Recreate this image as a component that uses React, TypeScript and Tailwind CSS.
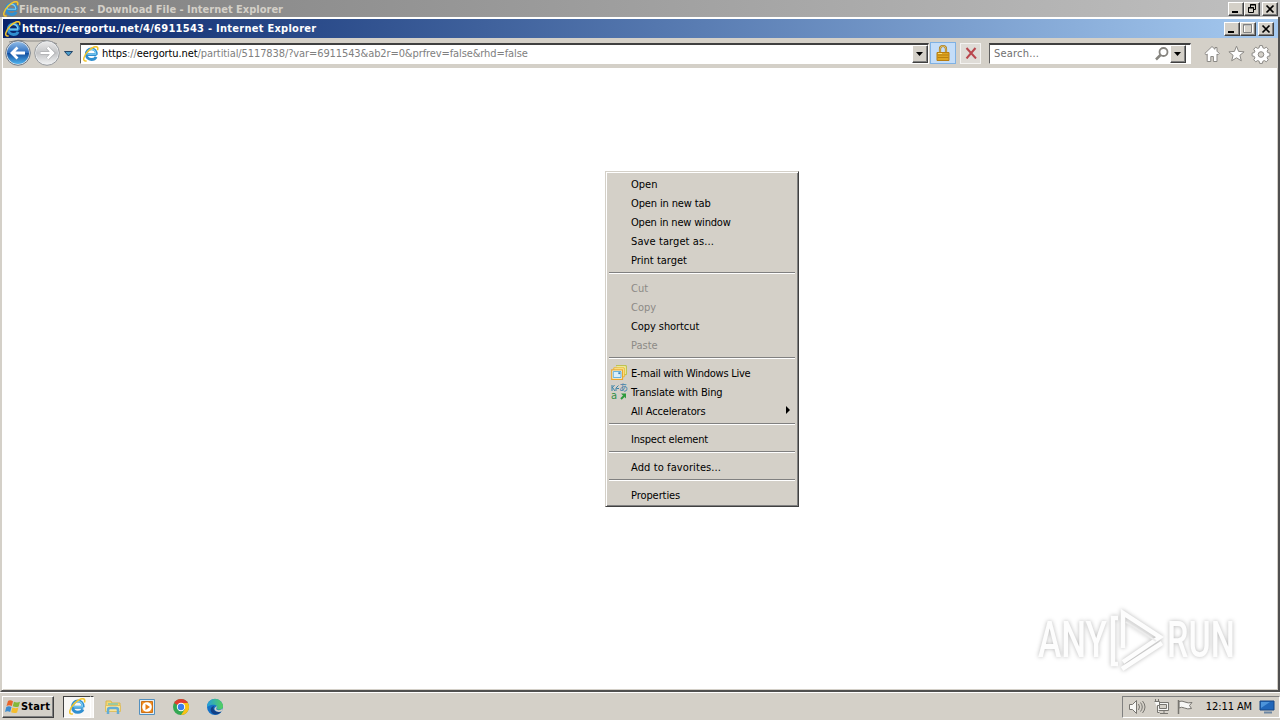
import { ReactNode } from 'react'
import clsx from 'clsx'

const UI_FONT = "font-['DejaVu_Sans_Condensed','DejaVu_Sans',sans-serif]"

type MenuEntry = { label: string; tracking?: string; disabled?: boolean; icon?: ReactNode; submenu?: boolean }

const MENU: MenuEntry[][] = [
  [
    { label: 'Open' },
    { label: 'Open in new tab', tracking: 'tracking-[-0.13px]' },
    { label: 'Open in new window', tracking: 'tracking-[-0.18px]' },
    { label: 'Save target as...', tracking: 'tracking-[0.1px]' },
    { label: 'Print target' }
  ],
  [
    { label: 'Cut', disabled: true },
    { label: 'Copy', disabled: true },
    { label: 'Copy shortcut', tracking: 'tracking-[-0.08px]' },
    { label: 'Paste', disabled: true }
  ],
  [
    { label: 'E-mail with Windows Live', tracking: 'tracking-[-0.27px]', icon: <MailIcon /> },
    { label: 'Translate with Bing', tracking: 'tracking-[-0.14px]', icon: <TranslateIcon /> },
    { label: 'All Accelerators', tracking: 'tracking-[-0.16px]', submenu: true }
  ],
  [{ label: 'Inspect element', tracking: 'tracking-[-0.2px]' }],
  [{ label: 'Add to favorites...', tracking: 'tracking-[0.1px]' }],
  [{ label: 'Properties', tracking: 'tracking-[-0.08px]' }]
]

function IeIcon({ className }: { className: string }) {
  return (
    <svg viewBox="0 0 16 16" className={clsx('shrink-0', className)} fill="none">
      <path d="M13.500 8.600H4M13.400 8.600C13.500 4.900 11.400 2.900 8.400 2.900C5.300 2.900 3.300 5.200 3.300 8.300C3.300 11.500 5.400 13.500 8.400 13.500C10.700 13.500 12.300 12.500 13.100 10.800" stroke="#2f8fd0" strokeWidth="2.8" />
      <path d="M13 8.300H4.500M12.800 8C12.600 5 10.700 3.400 8.400 3.400C5.800 3.400 4 5.400 4 8.200" stroke="#7fd0f5" strokeWidth="1.1" />
      <path d="M3.600 14.800C1.400 15.700 .3 14.300 .9 11.900C2 7.700 6.700 2.600 11 1C14 0 15.500 1.300 14.500 4.200" stroke="#f3c52c" strokeWidth="1.5" />
    </svg>
  )
}

function MailIcon() {
  return (
    <svg viewBox="0 0 16 16" className="mb-0.5 size-4">
      <path d="M5 .7h10.300v9H13" fill="#f5f3b0" stroke="#b8bd38" />
      <path d="M2.800 2.800h10.500v9H2.800z" fill="#fdf0a0" stroke="#e8b634" />
      <path d="M.7 4.800h10.800v9.500H.7z" fill="#eef8fd" stroke="#e9a72e" strokeWidth="1.2" />
      <path d="M2.300 6.500h7.700v6H2.300z" fill="#d9effb" stroke="#4ba2d2" strokeWidth=".8" />
      <path d="M7.300 7.300h2v1.800h-2z" fill="#3b85bd" />
    </svg>
  )
}

function TranslateIcon() {
  return (
    <div className="mb-0.5 grid size-4 grid-cols-2 grid-rows-2 text-[9px] leading-[8px]">
      <svg viewBox="0 0 8 8" className="size-2" fill="none" stroke="#3b83a8">
        <path d="M1 1v6M1 4l2.500-3M1.500 3.500L4 7M7.500 1.500L5 4M5 4v3M5.500 4.500h2.500" />
      </svg>
      <span className="font-['Noto_Sans_CJK_JP',sans-serif] whitespace-nowrap text-[#3479a6]">あ</span>
      <span className="text-[11px] text-[#2f8f45]">a</span>
      <svg viewBox="0 0 8 8" className="size-2" fill="#2d9a3b">
        <path d="M2 7l3-3" stroke="#2d9a3b" strokeWidth="2" />
        <path d="M2 1.500h5v5z" />
      </svg>
    </div>
  )
}

function RaisedButton({ className, children }: { className: string; children: ReactNode }) {
  return (
    <div className={clsx('flex shrink-0 items-center justify-center border border-t-white border-l-white border-r-[#404040] border-b-[#404040] bg-[#d4d0c8] shadow-[inset_-1px_-1px_0_#808080]', className)}>
      {children}
    </div>
  )
}

function WindowButtons({ restored }: { restored?: boolean }) {
  return (
    <div className="flex">
      <RaisedButton className="h-[14px] w-4">
        <svg viewBox="0 0 14 12" className="h-3 w-[14px]"><path d="M3 8h6v2H3z" /></svg>
      </RaisedButton>
      <RaisedButton className="h-[14px] w-4">
        {restored ? (
          <svg viewBox="0 0 14 12" className="h-3 w-[14px]" fill="none" stroke="#000">
            <path d="M5.500 4V1.500h5v5H9M5 2h6M3.500 4.500h5v5h-5zM3 5h6" />
          </svg>
        ) : (
          <svg viewBox="0 0 14 12" className="h-3 w-[14px]" fill="none" stroke="#808080">
            <path d="M3.500 1.500h8v8h-8zM3 2.500h9" stroke="#fff" />
            <path d="M2.500 1.500h8v8h-8zM2 2h9" />
          </svg>
        )}
      </RaisedButton>
      <RaisedButton className="ml-0.5 h-[14px] w-4">
        <svg viewBox="0 0 14 12" className="h-3 w-[14px]"><path d="M3.500 2.500l7 7m0-7l-7 7" stroke="#000" strokeWidth="1.700" /></svg>
      </RaisedButton>
    </div>
  )
}

function DropButton() {
  return (
    <RaisedButton className="h-[18px] w-4">
      <svg viewBox="0 0 8 4" className="h-1 w-2"><path d="M0 0h7L3.500 4z" /></svg>
    </RaisedButton>
  )
}

function NavButtons() {
  return (
    <svg viewBox="0 0 72 28" className="h-7 w-[72px] shrink-0">
      <defs>
        <linearGradient id="back" x2="0" y2="1">
          <stop offset="0" stopColor="#8db9e6" />
          <stop offset=".48" stopColor="#2f6fc0" />
          <stop offset=".52" stopColor="#144f9f" />
          <stop offset="1" stopColor="#4fb2ee" />
        </linearGradient>
        <linearGradient id="forward" x2="0" y2="1">
          <stop offset="0" stopColor="#e8e8e8" />
          <stop offset=".5" stopColor="#c2c3c5" />
          <stop offset="1" stopColor="#f0f1f2" />
        </linearGradient>
      </defs>
      <path d="M6 3Q15 0 24 2h12Q44 0 54 5" fill="none" stroke="#8c8a86" />
      <circle cx="15" cy="14" r="12.300" fill="#dfe5ec" stroke="#6c7784" />
      <circle cx="15" cy="14" r="11" fill="url(#back)" />
      <path d="M22 14H9.500M14.500 8.500L9 14l5.500 5.500" fill="none" stroke="#fff" strokeWidth="2.800" />
      <circle cx="44" cy="14" r="12.300" fill="#eceef0" stroke="#96999d" />
      <circle cx="44" cy="14" r="11" fill="url(#forward)" />
      <path d="M37.500 14H50M44.500 8.500L50 14l-5.500 5.500" fill="none" stroke="#9c9ea1" strokeWidth="3.800" />
      <path d="M37.500 14H50M44.500 8.500L50 14l-5.500 5.500" fill="none" stroke="#fff" strokeWidth="2.600" />
      <path d="M61.500 12.500h8L65.500 17z" fill="#4b9cc9" stroke="#24466a" />
    </svg>
  )
}

function LockIcon() {
  return (
    <svg viewBox="0 0 16 18" className="h-[18px] w-4">
      <path d="M5 9V5a3 3 0 0 1 6 0v4" fill="none" stroke="#a87b1d" strokeWidth="2.200" />
      <path d="M5 9V5a3 3 0 0 1 6 0v4" fill="none" stroke="#e9ca72" strokeWidth=".8" />
      <path d="M2 8.500h12v8H2z" fill="#dea520" stroke="#b67c12" />
      <path d="M2.500 11h11M2.500 13.500h11" stroke="#b9810f" />
      <path d="M3 9.500h4" stroke="#f9de7a" />
    </svg>
  )
}

function ToolbarIcons() {
  return (
    <svg viewBox="0 0 68 20" className="mt-0.5 ml-[13px] h-5 w-[68px] shrink-0" fill="#fff" stroke="#8b8985" strokeLinejoin="round">
      <path d="M8 2.500L.8 9.500l1.400 1.300 1-.8v7.500h3.600v-5h2.600v5H13V10l1 .8 1.300-1.300-2.300-2.300V3.500h-2v1.800z" />
      <path d="M32.500 2.200l2.100 5.200 5.500.4-4.200 3.500 1.400 5.500-4.800-3-4.800 3 1.400-5.500-4.200-3.500 5.500-.4z" />
      <path d="M55.600 2.300h2.800l.5 2.200 1.500.6 1.900-1.200 2 2-1.200 1.900.6 1.500 2.200.5v2.800l-2.200.5-.6 1.500 1.200 1.900-2 2-1.900-1.200-1.500.6-.5 2.200h-2.800l-.5-2.200-1.500-.6-1.900 1.200-2-2 1.200-1.900-.6-1.500-2.200-.5V9.800l2.200-.5.6-1.500-1.200-1.900 2-2 1.900 1.200 1.500-.6z" transform="translate(0 -.7)" />
      <circle cx="57" cy="10.500" r="2.800" fill="#d4d0c8" />
    </svg>
  )
}

function Toolbar() {
  return (
    <div className="flex h-[30px] items-center bg-[#d4d0c8]">
      <NavButtons />
      <div className="ml-[5px] flex h-[21px] w-[849px] shrink-0 items-center border border-t-2 border-t-[#404040] border-l-[#606060] border-r-white border-b-white bg-white pl-0.5">
        <IeIcon className="size-4" />
        <div className="ml-[3px] grow pt-0.5 text-[11px] tracking-[-0.1px] whitespace-pre text-[#808080]">
          <span className="text-black">https</span>://<span className="text-black">eergortu.net</span>/partitial/5117838/?var=6911543&amp;ab2r=0&amp;prfrev=false&amp;rhd=false
        </div>
        <DropButton />
      </div>
      <div className="ml-px flex h-[22px] w-[26px] shrink-0 items-center justify-center border border-[#7fb1e3] bg-[#c4ddf8]">
        <LockIcon />
      </div>
      <div className="ml-1 flex h-[21px] w-[21px] shrink-0 items-center justify-center border border-[#f4f3f1] bg-[#dfdcd7]">
        <svg viewBox="0 0 12 12" className="size-3"><path d="M1.500 1L11 11.500M10.500 1L1.500 11.500" stroke="#b9474e" strokeWidth="2" /></svg>
      </div>
      <div className="ml-2 flex h-[21px] w-[202px] shrink-0 items-center border border-t-2 border-t-[#404040] border-l-[#606060] border-r-white border-b-white bg-white pr-[4px] pl-1">
        <span className="grow pt-0.5 text-[11px] tracking-[0.2px] text-[#707070]">Search...</span>
        <svg viewBox="0 0 16 16" className="size-4" fill="none" stroke="#86847f">
          <circle cx="9.500" cy="6" r="4" strokeWidth="1.800" />
          <path d="M6.500 9L2 13.500" strokeWidth="2.500" />
        </svg>
        <DropButton />
      </div>
      <ToolbarIcons />
    </div>
  )
}

function ContextMenu() {
  return (
    <div className="absolute top-[171px] left-[605px] h-[336px] w-[194px] border border-t-[#d4d0c8] border-l-[#d4d0c8] border-r-[#404040] border-b-[#404040] bg-[#d4d0c8] px-[3px] pt-[3px] text-[11px] shadow-[inset_1px_1px_0_#fff,inset_-1px_-1px_0_#808080]">
      {MENU.map((group, i) => (
        <div key={i}>
          {i > 0 && (
            <div className="h-[9px] pt-0.5">
              <div className="h-0.5 border-t border-b border-t-[#808080] border-b-white" />
            </div>
          )}
          {group.map(({ label, tracking, disabled, icon, submenu }) => (
            <div key={label} className="flex h-[19px] items-center">
              <div className="ml-0.5 w-5 shrink-0">{icon}</div>
              <span className={clsx('grow pt-0.5 whitespace-pre', tracking, disabled ? 'text-[#8c8a86]' : 'text-black')}>{label}</span>
              {submenu && <svg viewBox="0 0 4 8" className="mr-[5px] mb-1 h-2 w-1"><path d="M0 0l4 4-4 4z" /></svg>}
            </div>
          ))}
        </div>
      ))}
    </div>
  )
}

function Watermark() {
  return (
    <div className="absolute top-[600px] left-[1030px] flex h-20 w-[215px] items-center pl-2 font-[Roboto] text-[50px] leading-[80px] font-medium text-[#fdfdfd] drop-shadow-[0_0_2px_#b8b8b8]">
      <div className="w-[66px]">
        <div className="w-24 origin-left scale-x-[0.7]">ANY</div>
      </div>
      <svg viewBox="74 0 60 80" className="h-20 w-[60px] shrink-0" fill="none" stroke="#fdfdfd">
        <path d="M93 48V13l37 24-37 25M88 18h-5v46h5M92 69l40-26" strokeWidth="4.500" />
        <path d="M96 22l30 19" stroke="#ececec" strokeWidth="2" />
      </svg>
      <div className="ml-[3px] w-[66px]">
        <div className="w-24 origin-left scale-x-[0.68]">RUN</div>
      </div>
    </div>
  )
}

function TrayIcons() {
  return (
    <svg viewBox="0 0 68 18" className="h-[18px] w-[68px] shrink-0" fill="#f7f7f5" stroke="#777570">
      <path d="M.5 6.500h3l4-4v13l-4-4h-3z" />
      <path d="M9.500 6q2 3 0 6M11.500 4.500q3.500 4.500 0 9M13.500 3q5 6 0 12" fill="none" />
      <path d="M28.500 4.500h11v8h-11zM31 15.500h8M35 12.500v3" />
      <path d="M30.500 6.500h7v4h-7z" fill="#d4d0c8" />
      <path d="M25.500 3.500h5v4h-2v7h2M26.500 1v2M29.500 1v2" />
      <path d="M50 3.500q3-1 6 .5t7 .5l-2.500 3 2 3q-4 1-7-.500t-5.500 0z" />
      <path d="M49.500 2v14" strokeWidth="1.500" />
    </svg>
  )
}

function Taskbar() {
  return (
    <div className="flex h-7 items-center border-t border-white bg-[#d4d0c8]">
      <RaisedButton className="ml-0.5 h-[22px] w-[52px]">
        <svg viewBox="0 0 16 16" className="size-4 shrink-0">
          <path d="M3 2q2-1.500 5 .3L6.800 7Q4 5.700 1.500 7z" fill="#e9652a" />
          <path d="M9 2.700q3 1.500 6 0L13.700 7.500q-3 1.200-6-.2z" fill="#83b83a" />
          <path d="M1.300 8q2.500-1.300 5.200 0L5.200 13Q2.500 11.500 0 13z" fill="#3c8cd0" />
          <path d="M7.400 8.400q3 1.400 6 .2l-1.300 4.800q-3 1.200-6-.2z" fill="#f5bd2c" />
        </svg>
        <span className="pt-px pr-px text-[11px] font-bold tracking-[0.2px]">Start</span>
      </RaisedButton>
      <div className="ml-[9px] flex h-[22px] w-7 shrink-0 items-center justify-center border border-t-[#404040] border-l-[#404040] border-r-white border-b-white bg-[#f8f7f5]">
        <IeIcon className="size-[17px]" />
      </div>
      <div className="h-[22px] w-[3px] border-t border-r border-t-[#404040] border-r-white bg-[#f8f7f5]" />
      <svg viewBox="0 0 18 18" className="ml-[10px] size-[18px] shrink-0">
        <path d="M2 3h5l1 2h8v4H2z" fill="#f3d875" stroke="#d8b64f" />
        <path d="M4 5h10v3H4z" fill="#9cc99d" />
        <path d="M1.500 7.500h15v6h-15z" fill="#f7e69c" stroke="#dfbf62" />
        <path d="M4 16v-4q0-2 2-2h6q2 0 2 2v4" fill="none" stroke="#63add5" strokeWidth="2.500" />
      </svg>
      <svg viewBox="0 0 18 18" className="ml-4 size-[18px] shrink-0">
        <path d="M1.500 1.500h15v15h-15z" fill="#e1edf5" stroke="#5390bf" />
        <path d="M3.500 3.500h11v11h-11z" fill="#f28c1d" stroke="#cc7017" />
        <circle cx="9" cy="9" r="4.800" fill="#fff" />
        <path d="M7.500 6l4.500 3-4.500 3z" fill="#e87c13" />
      </svg>
      <svg viewBox="0 0 18 18" className="ml-4 size-[18px] shrink-0">
        <circle cx="9" cy="9" r="8" fill="#34a853" />
        <path d="M9 9L2.070 5A8 8 0 0 1 15.930 5z" fill="#e23c2f" />
        <path d="M9 5h6.930A8 8 0 0 1 9 17l4-6z" fill="#fbc116" />
        <circle cx="9" cy="9" r="4.200" fill="#fff" />
        <circle cx="9" cy="9" r="3.200" fill="#3b7ded" />
      </svg>
      <svg viewBox="0 0 18 18" className="ml-4 size-[18px] shrink-0">
        <defs>
          <linearGradient id="edge"><stop stopColor="#249ddd" /><stop offset="1" stopColor="#54d15b" /></linearGradient>
        </defs>
        <circle cx="9" cy="9" r="8" fill="#1672c7" />
        <path d="M1 9A8 8 0 0 1 17 8.500C17 12 12 12.500 10.500 11C13 8 8 4.500 1 9z" fill="url(#edge)" />
        <path d="M8 8c-2 4 2 7 7.500 5.500-3 4-9 4-10.500 0C4 11 5.500 8.500 8 8z" fill="#123f86" />
        <path d="M10.500 8c1 1.500-1 2.500 0 3.500 2 1.300 5 .5 6.500-1.200l-1 3c-4 1.500-8 0-7.500-3z" fill="#d4d0c8" />
      </svg>
      <div className="ml-auto flex h-[22px] w-[158px] shrink-0 items-center border border-t-[#808080] border-l-[#808080] border-r-white border-b-white pl-1.5">
        <TrayIcons />
        <span className="ml-auto pt-px pr-[7px] text-[11px] tracking-[-0.1px] whitespace-nowrap">12:11 AM</span>
        <svg viewBox="0 0 16 16" className="mr-1 size-4 shrink-0">
          <path d="M1 2h14v9H1z" fill="#2167ba" stroke="#164684" />
          <path d="M2 3h9L2 9z" fill="#4d94da" />
          <path d="M5 13.500h8" stroke="#6d87a3" strokeWidth="2" />
        </svg>
      </div>
    </div>
  )
}

export default function App() {
  return (
    <div className={clsx('relative flex h-[720px] w-[1280px] flex-col overflow-hidden bg-[#d4d0c8] text-black', UI_FONT)}>
      <div className="flex h-[17px] shrink-0 items-center bg-linear-to-r from-[#808080] to-[#c0c0c0] pr-0.5 pl-[3px]">
        <IeIcon className="size-4" />
        <span className="grow pt-[3px] text-[11px] leading-[14px] font-bold whitespace-pre text-[#d4d0c8]">Filemoon.sx - Download File - Internet Explorer</span>
        <WindowButtons restored />
      </div>
      <div className="flex h-[675px] flex-col border-r-2 border-b-2 border-l-2 border-r-[#505050] border-b-[#505050] border-l-[#d4d0c8]">
        <div className="flex grow flex-col border-t-2 border-l border-white">
          <div className="flex h-[19px] shrink-0 items-center bg-linear-to-r from-[#0a246a] to-[#a6caf0] pr-1 pl-0.5">
            <IeIcon className="size-4" />
            <span className="ml-px grow pt-0.5 text-[11px] font-bold tracking-[0.27px] whitespace-pre text-white">https://eergortu.net/4/6911543 - Internet Explorer</span>
            <WindowButtons />
          </div>
          <Toolbar />
          <div className="grow border-r border-b border-[#d4d0c8] bg-white" />
        </div>
      </div>
      <Taskbar />
      <Watermark />
      <ContextMenu />
    </div>
  )
}
